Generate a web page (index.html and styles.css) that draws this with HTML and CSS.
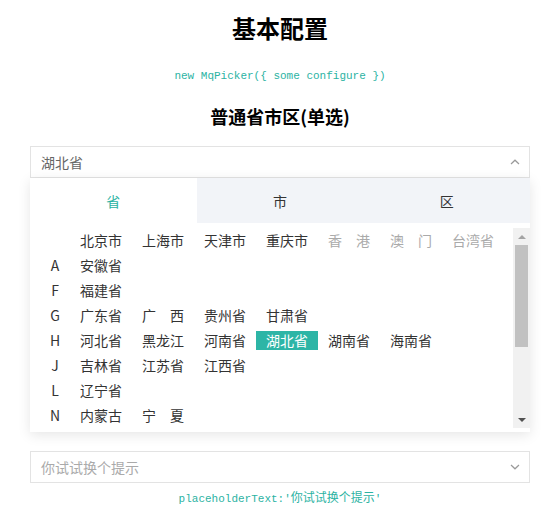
FILE: index.html
```html
<!DOCTYPE html>
<html lang="zh-CN">
<head>
<meta charset="utf-8">
<title>基本配置</title>
<link rel="stylesheet" href="styles.css">
</head>
<body>
<div class="page">
  <h1 class="title">基本配置</h1>
  <p class="code">new MqPicker({ some configure })</p>
  <h2 class="subtitle">普通省市区(单选)</h2>

  <div class="select">
    <span class="select-value">湖北省</span>
    <svg class="chevron" width="10" height="6" viewBox="0 0 10 6"><polyline points="1,5 5,1.2 9,5" fill="none" stroke="#9a9a9a" stroke-width="1.2"/></svg>
  </div>

  <div class="panel">
    <div class="tabs">
      <div class="tab active">省</div>
      <div class="tab">市</div>
      <div class="tab">区</div>
    </div>
    <div class="scroll">
      <div class="rows">
        <div class="row"><span class="letter"></span><div class="items"><span class="item">北京市</span><span class="item">上海市</span><span class="item">天津市</span><span class="item">重庆市</span><span class="item disabled">香　港</span><span class="item disabled">澳　门</span><span class="item disabled">台湾省</span></div></div>
        <div class="row"><span class="letter">A</span><div class="items"><span class="item">安徽省</span></div></div>
        <div class="row"><span class="letter">F</span><div class="items"><span class="item">福建省</span></div></div>
        <div class="row"><span class="letter">G</span><div class="items"><span class="item">广东省</span><span class="item">广　西</span><span class="item">贵州省</span><span class="item">甘肃省</span></div></div>
        <div class="row"><span class="letter">H</span><div class="items"><span class="item">河北省</span><span class="item">黑龙江</span><span class="item">河南省</span><span class="item selected">湖北省</span><span class="item">湖南省</span><span class="item">海南省</span></div></div>
        <div class="row"><span class="letter">J</span><div class="items"><span class="item">吉林省</span><span class="item">江苏省</span><span class="item">江西省</span></div></div>
        <div class="row"><span class="letter">L</span><div class="items"><span class="item">辽宁省</span></div></div>
        <div class="row"><span class="letter">N</span><div class="items"><span class="item">内蒙古</span><span class="item">宁　夏</span></div></div>
      </div>
      <div class="scrollbar">
        <span class="sb-btn"><span class="arrow-up"></span></span>
        <div class="sb-track"><div class="sb-thumb"></div></div>
        <span class="sb-btn"><span class="arrow-down"></span></span>
      </div>
    </div>
  </div>

  <div class="select second">
    <span class="select-placeholder">你试试换个提示</span>
    <svg class="chevron" width="10" height="6" viewBox="0 0 10 6"><polyline points="1,1 5,4.8 9,1" fill="none" stroke="#9a9a9a" stroke-width="1.2"/></svg>
  </div>
  <p class="code bottom">placeholderText:'<span class="cjk">你试试换个提示</span>'</p>
</div>
</body>
</html>
```

FILE: styles.css
```css
html, body {
  margin: 0;
  padding: 0;
  background: #fff;
}

body {
  font-family: "Noto Sans CJK SC", "Noto Sans", sans-serif;
  color: #333;
}

.page {
  width: 500px;
  margin: 0 auto;
  padding-top: 12px;
}

.title {
  margin: 0;
  font-size: 24px;
  line-height: 32px;
  font-weight: 700;
  color: #000;
  text-align: center;
}

.code {
  margin: 24px 0 0;
  font-family: "Liberation Mono", "Noto Sans CJK SC", monospace;
  font-size: 11px;
  line-height: 16px;
  color: #2bb3a3;
  text-align: center;
}

.code .cjk {
  font-family: "Noto Sans CJK SC", sans-serif;
  font-size: 12px;
}

.subtitle {
  margin: 19px 0 0;
  font-size: 18px;
  line-height: 26px;
  font-weight: 700;
  color: #000;
  text-align: center;
}

.select {
  margin-top: 17px;
  height: 32px;
  box-sizing: border-box;
  border: 1px solid #e3e3e3;
  display: flex;
  align-items: center;
  justify-content: space-between;
  padding: 0 9px 0 10px;
  font-size: 14px;
  background: #fff;
}

.select-value {
  color: #666;
}

.select-placeholder {
  color: #aaa;
}

.chevron {
  display: block;
}

.panel {
  background: #fff;
  box-shadow: 0 3px 12px rgba(0, 0, 0, 0.1);
  padding-bottom: 4px;
}

.tabs {
  display: flex;
  height: 45px;
}

.tab {
  flex: 1;
  display: flex;
  align-items: center;
  justify-content: center;
  font-size: 14px;
  color: #333;
  background: #f2f4f8;
}

.tab.active {
  background: #fff;
  color: #2bb3a3;
}

.scroll {
  margin-top: 5px;
  height: 200px;
  display: flex;
}

.rows {
  flex: 1;
  overflow: hidden;
}

.scrollbar {
  width: 17px;
  flex: none;
  display: flex;
  flex-direction: column;
  background: #f1f1f1;
}

.sb-btn {
  height: 17px;
  flex: none;
  display: flex;
  align-items: center;
  justify-content: center;
}

.arrow-up {
  width: 0;
  height: 0;
  border-left: 4px solid transparent;
  border-right: 4px solid transparent;
  border-bottom: 4px solid #a3a3a3;
}

.arrow-down {
  width: 0;
  height: 0;
  border-left: 4px solid transparent;
  border-right: 4px solid transparent;
  border-top: 4px solid #505050;
}

.sb-track {
  flex: 1;
}

.sb-thumb {
  height: 102px;
  margin: 0 2px;
  background: #c1c1c1;
}

.row {
  display: flex;
  align-items: flex-start;
  padding: 3px 0;
}

.letter {
  width: 30px;
  margin-left: 10px;
  flex: none;
  text-align: center;
  font-size: 14px;
  line-height: 19px;
  color: #333;
}

.items {
  display: flex;
  flex-wrap: wrap;
}

.item {
  padding: 0 10px;
  font-size: 14px;
  line-height: 19px;
  color: #333;
  white-space: nowrap;
}

.item.disabled {
  color: #aaa;
}

.item.selected {
  background: #2db5a6;
  color: #fff;
}

.select.second {
  margin-top: 19px;
}

.code.bottom {
  margin-top: 6px;
}
```
